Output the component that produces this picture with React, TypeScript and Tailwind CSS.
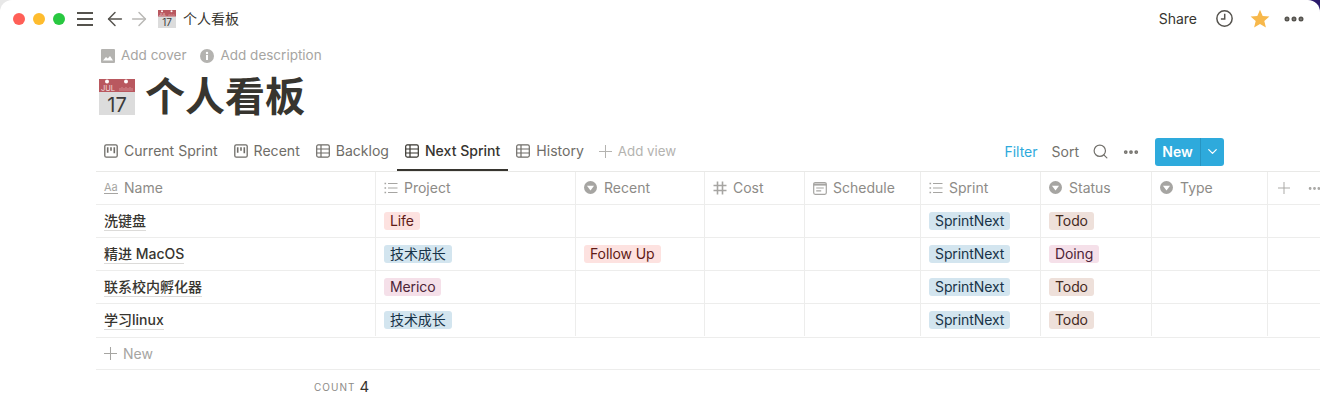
import type { JSX, ReactNode } from 'react';
import { ArrowLeft, ArrowRight, ChevronDown, Ellipsis, Search } from 'lucide-react';

const CJK = "font-['Inter','Noto_Sans_CJK_SC',sans-serif]";

function CalendarIcon({ className }: { className: string }): JSX.Element {
  return (
    <svg viewBox="0 0 36 36" className={className}>
      <rect x="0" y="0" width="36" height="36" fill="#dcdcdc" />
      <rect x="0" y="0" width="36" height="13" fill="#b9585f" />
      <circle cx="8" cy="2.5" r="2" fill="#fff" />
      <circle cx="27" cy="2.5" r="2" fill="#fff" />
      <path d="M21 12V9M23 12V8M25 12V9M27 12V8M29 12V9M31 12V8M33 12V9" stroke="#d99aa0" strokeWidth="0.8" />
      <text x="2" y="11.5" fontSize="7.5" fill="#f3dede" fontFamily="Inter, sans-serif">
        JUL
      </text>
      <text x="18" y="32.5" fontSize="20" textAnchor="middle" fill="#3b3b3b" fontFamily="Inter, sans-serif">
        17
      </text>
    </svg>
  );
}

function PlusIcon({ className }: { className: string }): JSX.Element {
  return (
    <svg viewBox="0 0 14 14" className={className} fill="none" stroke="currentColor" strokeWidth="1.1">
      <path d="M7 0v14M0 7h14" />
    </svg>
  );
}

function BoardIcon(): JSX.Element {
  return (
    <svg viewBox="0 0 14 14" className="h-[14px] w-[14px]" fill="none" stroke="currentColor">
      <rect x="0.8" y="0.8" width="12.4" height="12.4" rx="1.5" strokeWidth="1.3" />
      <path d="M3.7 3.2v5.6M7 3.2v3.6M10.3 3.2v6" strokeWidth="1.6" />
    </svg>
  );
}

function TableIcon(): JSX.Element {
  return (
    <svg viewBox="0 0 14 14" className="h-[14px] w-[14px]" fill="none" stroke="currentColor" strokeWidth="1.2">
      <rect x="0.7" y="0.9" width="12.6" height="12.2" rx="1.5" />
      <path d="M0.7 5h12.6M0.7 9h12.6M5 1v12" />
    </svg>
  );
}

function ListIcon(): JSX.Element {
  return (
    <svg viewBox="0 0 14 14" className="h-[14px] w-[14px]" fill="none" stroke="#a6a5a2" strokeWidth="1.2">
      <path d="M4 2.5h9.5M4 7h9.5M4 11.5h9.5" />
      <path d="M0.5 2.5h1.6M0.5 7h1.6M0.5 11.5h1.6" strokeWidth="1.5" />
    </svg>
  );
}

function SelectIcon(): JSX.Element {
  return (
    <svg viewBox="0 0 14 14" className="mr-[1px] h-[13px] w-[13px]">
      <circle cx="7" cy="7" r="7" fill="#a6a5a2" />
      <path d="M3.2 5.2h7.6L7 10.2z" fill="#fff" />
    </svg>
  );
}

function NumberIcon(): JSX.Element {
  return (
    <svg viewBox="0 0 14 14" className="h-[14px] w-[14px]" fill="none" stroke="#a6a5a2" strokeWidth="1.6">
      <path d="M4.5 0.5v13M9.5 0.5v13M0.5 4.5h13M0.5 9.5h13" />
    </svg>
  );
}

function DateIcon(): JSX.Element {
  return (
    <svg viewBox="0 0 14 14" className="h-[14px] w-[14px]" fill="none" stroke="#a6a5a2" strokeWidth="1.2">
      <rect x="0.7" y="1.6" width="12.6" height="11.7" rx="1.5" />
      <path d="M0.7 3.6h12.6" strokeWidth="2" />
      <path d="M3.2 7h7.6M3.2 9.8h5" />
    </svg>
  );
}

function Tag({ color, children }: { color: string; children: ReactNode }): JSX.Element {
  return (
    <span className={`rounded-[3px] px-[6px] text-[14px] leading-[18px] tracking-[-0.1px] ${color}`}>{children}</span>
  );
}

const life = 'bg-[#fde2e0] text-[#5f1a16]';
const blue = 'bg-[#d3e5ef] text-[#183347]';
const merico = 'bg-[#f5e0e9] text-[#4c2337]';
const todo = 'bg-[#eee0da] text-[#442a1e]';
const doing = 'bg-[#f5e0e9] text-[#4c2337]';

const rows = [
  { name: '洗键盘', project: <Tag color={life}>Life</Tag>, status: <Tag color={todo}>Todo</Tag> },
  {
    name: '精进 MacOS',
    project: <Tag color={blue}>技术成长</Tag>,
    recent: <Tag color={life}>Follow Up</Tag>,
    status: <Tag color={doing}>Doing</Tag>,
  },
  { name: '联系校内孵化器', project: <Tag color={merico}>Merico</Tag>, status: <Tag color={todo}>Todo</Tag> },
  { name: '学习linux', project: <Tag color={blue}>技术成长</Tag>, status: <Tag color={todo}>Todo</Tag> },
];

const columns = [
  { label: 'Name', width: 'w-[280px]', icon: <span className="w-[14px] border-b border-[#a6a5a2] text-[11px] leading-[12px] text-[#a6a5a2]">Aa</span> },
  { label: 'Project', width: 'w-[200px]', icon: <ListIcon /> },
  { label: 'Recent', width: 'w-[129px]', icon: <SelectIcon /> },
  { label: 'Cost', width: 'w-[100px]', icon: <NumberIcon /> },
  { label: 'Schedule', width: 'w-[116px]', icon: <DateIcon /> },
  { label: 'Sprint', width: 'w-[120px]', icon: <ListIcon /> },
  { label: 'Status', width: 'w-[111px]', icon: <SelectIcon /> },
  { label: 'Type', width: 'w-[116px]', icon: <SelectIcon /> },
];

const views = [
  { label: 'Current Sprint', icon: <BoardIcon /> },
  { label: 'Recent', icon: <BoardIcon /> },
  { label: 'Backlog', icon: <TableIcon /> },
  { label: 'Next Sprint', icon: <TableIcon />, active: true },
  { label: 'History', icon: <TableIcon /> },
];

function Cell({ width, children }: { width: string; children?: ReactNode }): JSX.Element {
  return (
    <div className={`flex h-full shrink-0 items-center border-r border-[#ededec] pl-[8px] ${width}`}>{children}</div>
  );
}

export default function App(): JSX.Element {
  return (
    <div className={`h-[418px] w-[1320px] overflow-hidden bg-[linear-gradient(90deg,#e8e8e8_0%,#e8e8e8_50%,#2a1a6b_50%)] ${CJK}`}>
      <div className="h-full w-full rounded-t-[12px] bg-white">
        <header className="flex h-[37px] items-center pl-[13px] pr-[14px] text-[#37352f]">
          <div className="mt-[1px] flex gap-[8px]">
            <span className="h-[12px] w-[12px] rounded-full bg-[#ff5f57]" />
            <span className="h-[12px] w-[12px] rounded-full bg-[#febc2e]" />
            <span className="h-[12px] w-[12px] rounded-full bg-[#28c840]" />
          </div>
          <div className="ml-[12px] mt-[1px] flex h-[14px] w-[16px] flex-col justify-between">
            <span className="h-[2px] bg-[#55534e]" />
            <span className="h-[2px] bg-[#55534e]" />
            <span className="h-[2px] bg-[#55534e]" />
          </div>
          <ArrowLeft className="ml-[11px] h-[22px] w-[22px] text-[#55534e]" strokeWidth={1.6} />
          <ArrowRight className="ml-[2px] h-[22px] w-[22px] text-[#b9b8b5]" strokeWidth={1.6} />
          <CalendarIcon className="ml-[8px] h-[18px] w-[18px]" />
          <span className="ml-[7px] text-[14px]">个人看板</span>
          <span className="ml-auto text-[14px]">Share</span>
          <svg viewBox="0 0 16 16" className="ml-[19px] h-[17px] w-[17px]" fill="none" stroke="#55534e" strokeWidth="1.4">
            <circle cx="8" cy="8" r="7.2" />
            <path d="M8.2 3.5v5H4.6" />
          </svg>
          <svg viewBox="0 0 20 20" className="ml-[17px] h-[20px] w-[20px]" fill="#f7b84b">
            <path d="M10 .8l2.7 6.2 6.7.6-5.1 4.4 1.6 6.6L10 15.1l-5.9 3.5 1.6-6.6L.6 7.6l6.7-.6z" />
          </svg>
          <Ellipsis className="ml-[12px] h-[24px] w-[24px] text-[#55534e]" strokeWidth={3} />
        </header>

        <div className="ml-[96px]">
          <div className="flex h-[36px] items-center gap-[14px] pl-[5px] pt-[1px] text-[13.5px] text-[#a6a5a2]">
            <span className="flex items-center gap-[6px]">
              <svg viewBox="0 0 14 14" className="h-[14px] w-[14px]">
                <path fill="#b4b3b0" fillRule="evenodd" d="M1 0h12a1 1 0 0 1 1 1v12a1 1 0 0 1-1 1H1a1 1 0 0 1-1-1V1a1 1 0 0 1 1-1zm1 11.5h10L9 7 6.8 9.6 5 8z" />
              </svg>
              Add cover
            </span>
            <span className="flex items-center gap-[6px]">
              <svg viewBox="0 0 14 14" className="h-[14px] w-[14px]">
                <circle cx="7" cy="7" r="7" fill="#b4b3b0" />
                <rect x="6" y="6" width="2" height="5" fill="#fff" />
                <circle cx="7" cy="4" r="1.2" fill="#fff" />
              </svg>
              Add description
            </span>
          </div>
          <div className="flex h-[48px] items-center">
            <CalendarIcon className="ml-[3px] h-[36px] w-[36px]" />
            <h1 className="ml-[10px] text-[40px] font-bold leading-[48px] text-[#37352f]">个人看板</h1>
          </div>

          <div className="mt-[10px] flex h-[41px] items-stretch border-b border-[#e9e9e7] text-[14.05px]">
            {views.map((view) => (
              <div
                key={view.label}
                className={`flex items-center gap-[6px] border-b-2 px-[8px] pt-[1px] ${
                  view.active ? 'border-[#37352f] font-medium text-[#37352f]' : 'border-transparent text-[#6f6d68]'
                }`}
              >
                {view.icon}
                {view.label}
              </div>
            ))}
            <div className="flex items-center gap-[6px] px-[7px] pt-[1px] text-[13.3px] text-[#b4b3b0]">
              <PlusIcon className="h-[13px] w-[13px]" />
              Add view
            </div>
            <div className="ml-auto mr-[96px] flex items-center pt-[1px] text-[14px]">
              <span className="text-[#2eaadc]">Filter</span>
              <span className="ml-[14px] text-[#73716c]">Sort</span>
              <Search className="ml-[13px] h-[17px] w-[17px] text-[#73716c]" strokeWidth={1.7} />
              <Ellipsis className="ml-[13px] h-[18px] w-[18px] text-[#73716c]" strokeWidth={3} />
              <div className="ml-[15px] flex h-[28px] w-[69px] items-center rounded-[3px] bg-[#2eaadc] font-semibold text-white">
                <span className="flex h-full w-[46px] items-center justify-center border-r border-[#2795c2]">New</span>
                <ChevronDown className="ml-[4px] h-[15px] w-[15px]" strokeWidth={2} />
              </div>
            </div>
          </div>

          <div className="flex h-[33px] items-center border-b border-[#ededec] text-[14px] text-[#8d8b87]">
            {columns.map((col) => (
              <Cell key={col.label} width={col.width}>
                <span className="flex items-center gap-[6px] pb-[1px]">
                  {col.icon}
                  {col.label}
                </span>
              </Cell>
            ))}
            <PlusIcon className="ml-[10px] h-[12px] w-[12px] shrink-0 text-[#a6a5a2]" />
            <Ellipsis className="ml-[17px] h-[15px] w-[15px] shrink-0 text-[#a6a5a2]" strokeWidth={2.5} />
          </div>

          {rows.map((row, index) => (
            <div
              key={row.name}
              className={`flex items-center border-b border-[#ededec] text-[14px] text-[#37352f] ${
                index === rows.length - 1 ? 'h-[34px] pb-[1px]' : 'h-[33px]'
              }`}
            >
              <Cell width="w-[280px]">
                <span className="border-b border-[#dcdbd9] font-medium leading-[18px]">{row.name}</span>
              </Cell>
              <Cell width="w-[200px]">{row.project}</Cell>
              <Cell width="w-[129px]">{row.recent}</Cell>
              <Cell width="w-[100px]" />
              <Cell width="w-[116px]" />
              <Cell width="w-[120px]">
                <Tag color={blue}>SprintNext</Tag>
              </Cell>
              <Cell width="w-[111px]">{row.status}</Cell>
              <Cell width="w-[116px]" />
            </div>
          ))}

          <div className="flex h-[32px] items-center gap-[6px] border-b border-[#ededec] pl-[8px] text-[14px] text-[#a6a5a2]">
            <PlusIcon className="h-[13px] w-[13px]" />
            New
          </div>
          <div className="flex h-[35px] items-center pl-[218px]">
            <span className="text-[10px] tracking-[1px] text-[#8d8b87]">COUNT</span>
            <span className="ml-[4px] text-[15px] text-[#37352f]">4</span>
          </div>
        </div>
      </div>
    </div>
  );
}
